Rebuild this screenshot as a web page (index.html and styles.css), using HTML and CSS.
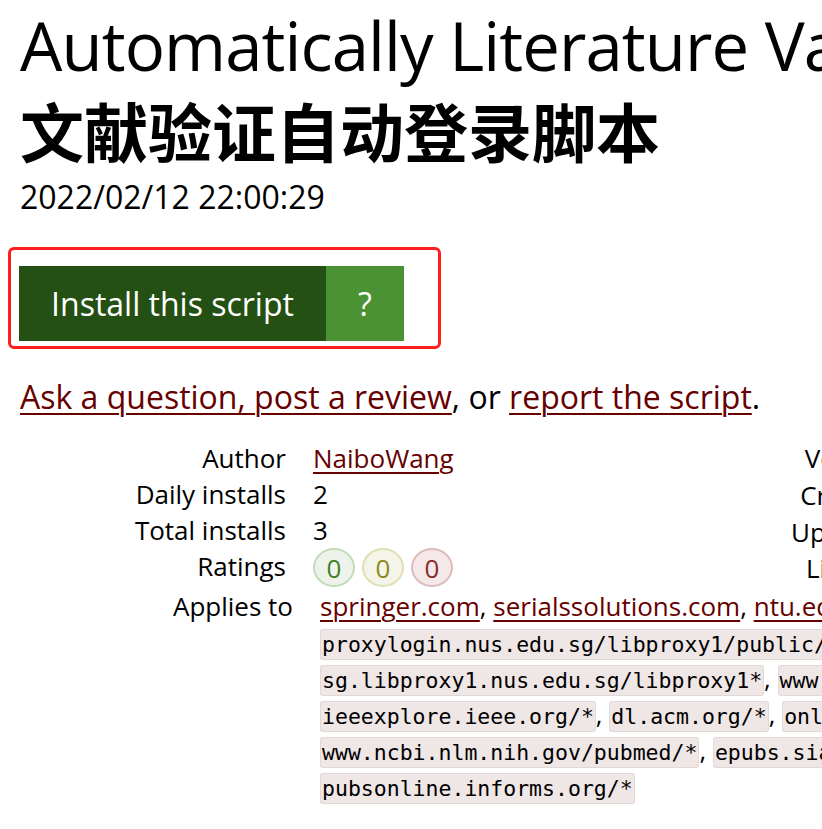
FILE: index.html
```html
<!DOCTYPE html>
<html lang="en">
<head>
<meta charset="utf-8">
<title>Automatically Literature Validation</title>
<link rel="stylesheet" href="styles.css">
</head>
<body>
<div class="page">
  <header class="script-header">
    <h2 class="script-name">Automatically Literature Validation Login Script</h2>
    <p class="script-description">文献验证自动登录脚本</p>
    <p class="script-date">2022/02/12 22:00:29</p>
  </header>

  <div class="install-area">
    <div class="install-row">
      <a class="install-link" href="#">Install this script</a>
      <a class="install-help" href="#">?</a>
    </div>
    <div class="highlight-box"></div>
  </div>

  <p class="feedback"><a href="#">Ask a question, post a review</a>, or <a href="#">report the script</a>.</p>

  <div class="meta">
    <dl class="meta-left">
      <dt>Author</dt><dd><a href="#">NaiboWang</a></dd>
      <dt>Daily installs</dt><dd>2</dd>
      <dt>Total installs</dt><dd>3</dd>
      <dt>Ratings</dt>
      <dd class="ratings">
        <span class="rating good">0</span>
        <span class="rating ok">0</span>
        <span class="rating bad">0</span>
      </dd>
    </dl>
    <dl class="meta-right">
      <dt>Version</dt><dd>1.0</dd>
      <dt>Created</dt><dd>2022/02/12</dd>
      <dt>Updated</dt><dd>2022/02/12</dd>
      <dt>License</dt><dd>MIT</dd>
    </dl>
  </div>

  <dl class="applies">
    <dt>Applies to</dt>
    <dd>
      <div class="applies-line"><a href="#">springer.com</a>, <a href="#">serialssolutions.com</a>, <a href="#">ntu.edu.sg</a>, <a href="#">nus.edu.sg</a></div>
      <div class="applies-line"><code>proxylogin.nus.edu.sg/libproxy1/public/login_ntu.html</code></div>
      <div class="applies-line"><code>sg.libproxy1.nus.edu.sg/libproxy1*</code>, <code>www.sciencedirect.com/*</code></div>
      <div class="applies-line"><code>ieeexplore.ieee.org/*</code>, <code>dl.acm.org/*</code>, <code>onlinelibrary.wiley.com/*</code></div>
      <div class="applies-line"><code>www.ncbi.nlm.nih.gov/pubmed/*</code>, <code>epubs.siam.org/*</code></div>
      <div class="applies-line"><code>pubsonline.informs.org/*</code></div>
    </dd>
  </dl>
</div>
</body>
</html>
```

FILE: styles.css
```css
html, body {
  margin: 0;
  padding: 0;
  overflow: hidden;
  background: #fff;
}

body {
  font-family: "Open Sans", "Noto Sans CJK SC", sans-serif;
  color: #000;
  font-size: 32px;
}

.page {
  padding-left: 20px;
  width: 1400px;
}

a {
  color: #670000;
  text-decoration: underline;
  text-decoration-thickness: 2px;
  text-underline-offset: 4px;
}

.script-header {
  margin: 0;
}

.script-name {
  margin: 0;
  font-size: 67px;
  font-weight: normal;
  line-height: 90px;
  white-space: nowrap;
  letter-spacing: -0.9px;
}

.script-description {
  margin: -4px 0 0 0;
  font-family: "Noto Sans CJK SC", sans-serif;
  font-size: 64px;
  font-weight: bold;
  line-height: 86px;
}

.script-date {
  margin: 3px 0 0 0;
  font-size: 32px;
  line-height: 44px;
}

.install-area {
  position: relative;
  margin-top: 47px;
  width: 420px;
}

.install-row {
  display: flex;
  height: 75px;
}

.install-link,
.install-help {
  display: flex;
  align-items: center;
  justify-content: center;
  color: #fff;
  text-decoration: none;
  font-size: 32px;
}

.install-link {
  margin-left: -1px;
  width: 307px;
  background: #245113;
}

.install-help {
  width: 78px;
  background: #4a9234;
}

.highlight-box {
  position: absolute;
  left: -12px;
  top: -19px;
  width: 427px;
  height: 96px;
  border: 3.5px solid #ff1d1d;
  border-radius: 6px;
}

.feedback {
  margin: 34px 0 0 0;
  line-height: 44px;
}

.meta {
  display: flex;
  margin-top: 21px;
  font-size: 26px;
  line-height: 36px;
}

.meta dl {
  margin: 0;
  display: grid;
  column-gap: 27px;
}

.meta dt {
  text-align: right;
}

.meta dd {
  margin: 0;
}

.meta-left {
  grid-template-columns: 266px 380px;
}

.meta-right {
  grid-template-columns: 203px 200px;
}

.ratings {
  display: flex;
  gap: 7px;
  align-items: center;
}

.rating {
  display: inline-flex;
  align-items: center;
  justify-content: center;
  width: 42px;
  height: 39px;
  border-radius: 50%;
  border: 2px solid;
  box-sizing: border-box;
  font-size: 26px;
  line-height: 1;
}

.rating.good {
  background: #edf2eb;
  border-color: #c3dcb8;
  color: #3f8125;
}

.rating.ok {
  background: #f4f4e8;
  border-color: #dfe0b1;
  color: #8a8a1a;
}

.rating.bad {
  background: #f4e8e8;
  border-color: #dcbcbc;
  color: #8a2b2b;
}

.applies {
  display: grid;
  grid-template-columns: 273px auto;
  column-gap: 27px;
  margin: 1px 0 0 0;
  font-size: 26px;
  line-height: 36px;
}

.applies dt {
  text-align: right;
}

.applies dd {
  margin: 0;
}

.applies-line {
  white-space: nowrap;
  height: 36px;
}

code {
  font-family: "DejaVu Sans Mono", monospace;
  font-size: 21.5px;
  background: #efe6e6;
  border: 1px solid #e3d8d8;
  border-radius: 3px;
  padding: 2px 1px;
  line-height: 29px;
}
```
